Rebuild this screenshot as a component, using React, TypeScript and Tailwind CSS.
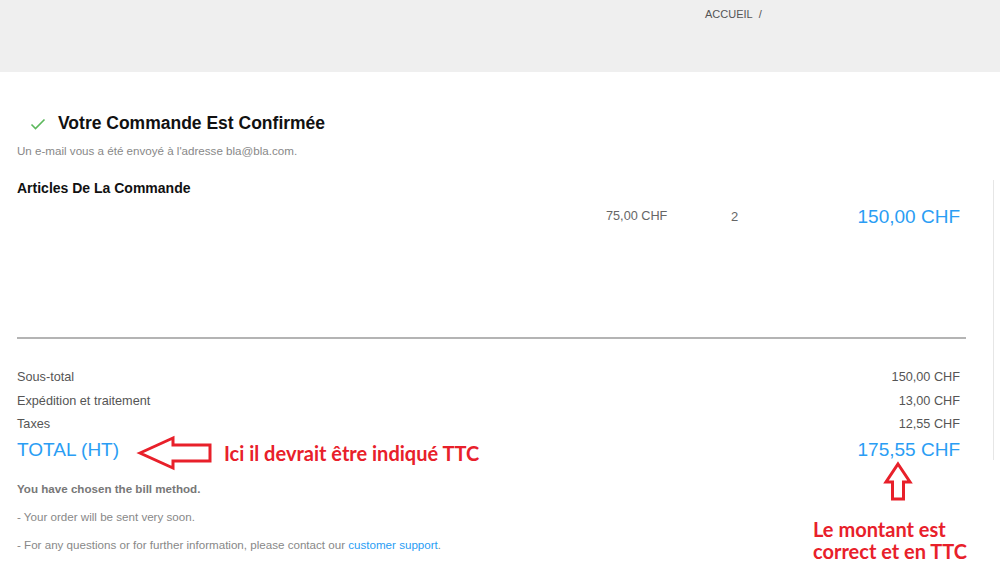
export default function App() {
  const summary = [
    { label: 'Sous-total', value: '150,00 CHF' },
    { label: 'Expédition et traitement', value: '13,00 CHF' },
    { label: 'Taxes', value: '12,55 CHF' },
  ];

  return (
    <div className="relative w-[1000px] h-[587px] overflow-hidden bg-white font-['Liberation_Sans',Arial,sans-serif]">
      {/* header */}
      <div className="h-[72px] bg-[#efefef] pl-[705px] pt-[1px]">
        <span className="text-[11px] leading-4 text-[#555]">ACCUEIL</span>
        <span className="ml-[6px] text-[11px] leading-4 text-[#555]">/</span>
      </div>

      <div className="ml-[17px] w-[949px]">
        {/* confirmation title */}
        <div className="mt-[39px] flex items-center">
          <svg width="16" height="14" viewBox="0 0 16 14" className="ml-[13px] mt-[2px]">
            <polyline points="1.5,7.5 5.5,11.5 14.5,2.5" fill="none" stroke="#5cb85c" strokeWidth="1.6" />
          </svg>
          <h1 className="ml-[12px] text-[17.5px] leading-6 font-bold text-[#111]">Votre Commande Est Confirmée</h1>
        </div>
        <p className="mt-[8px] text-[11.6px] leading-4 text-[#888]">Un e-mail vous a été envoyé à l'adresse bla@bla.com.</p>

        <h2 className="mt-[20px] text-[14px] leading-[18px] font-bold text-[#111]">Articles De La Commande</h2>

        {/* item row */}
        <div className="mt-[8px] flex items-center pr-[6px] h-6">
          <span className="ml-[589px] w-[125px] text-[12.7px] text-[#666]">75,00 CHF</span>
          <span className="text-[13px] text-[#666]">2</span>
          <span className="ml-auto text-[19px] text-[#2a9df4]">150,00 CHF</span>
        </div>

        <div className="mt-[108px] h-[2px] bg-[#b4b4b4]" />

        {/* totals */}
        <div className="mt-[27px] pr-[6px]">
          {summary.map((row) => (
            <div key={row.label} className="flex justify-between text-[12.7px] leading-[23.5px] text-[#555]">
              <span>{row.label}</span>
              <span>{row.value}</span>
            </div>
          ))}
          <div className="flex justify-between text-[19px] leading-[26px] text-[#2a9df4]">
            <span>TOTAL (HT)</span>
            <span>175,55 CHF</span>
          </div>
        </div>

        <p className="mt-[18px] text-[11.6px] leading-4 font-bold text-[#777]">You have chosen the bill method.</p>
        <p className="mt-[12px] text-[11.6px] leading-4 text-[#888]">- Your order will be sent very soon.</p>
        <p className="mt-[12px] text-[11.6px] leading-4 text-[#888]">
          - For any questions or for further information, please contact our{' '}
          <span className="text-[#2a9df4]">customer support</span>.
        </p>
      </div>

      {/* side border */}
      <div className="absolute left-[993px] top-[180px] h-[280px] w-px bg-[#e6e6e6]" />

      {/* annotations */}
      <svg className="absolute left-[136px] top-[435px]" width="78" height="36" viewBox="0 0 78 36">
        <polygon points="4,18 37,3 37,10 74,10 74,26 37,26 37,33" fill="white" stroke="#e8202a" strokeWidth="3" strokeLinejoin="miter" />
      </svg>
      <div className="absolute left-[224px] top-[441px] text-[20px] leading-6 font-bold text-[#e8202a] font-['Lato',sans-serif]">
        Ici il devrait être indiqué TTC
      </div>

      <svg className="absolute left-[883px] top-[461px]" width="30" height="41" viewBox="0 0 30 41">
        <polygon points="15,3 27,21 20.5,21 20.5,38 9.5,38 9.5,21 3,21" fill="white" stroke="#e8202a" strokeWidth="3" />
      </svg>
      <div className="absolute left-[813px] top-[518px] text-[20px] leading-[22px] font-bold text-[#e8202a] font-['Lato',sans-serif]">
        Le montant est
        <br />
        correct et en TTC
      </div>
    </div>
  );
}
